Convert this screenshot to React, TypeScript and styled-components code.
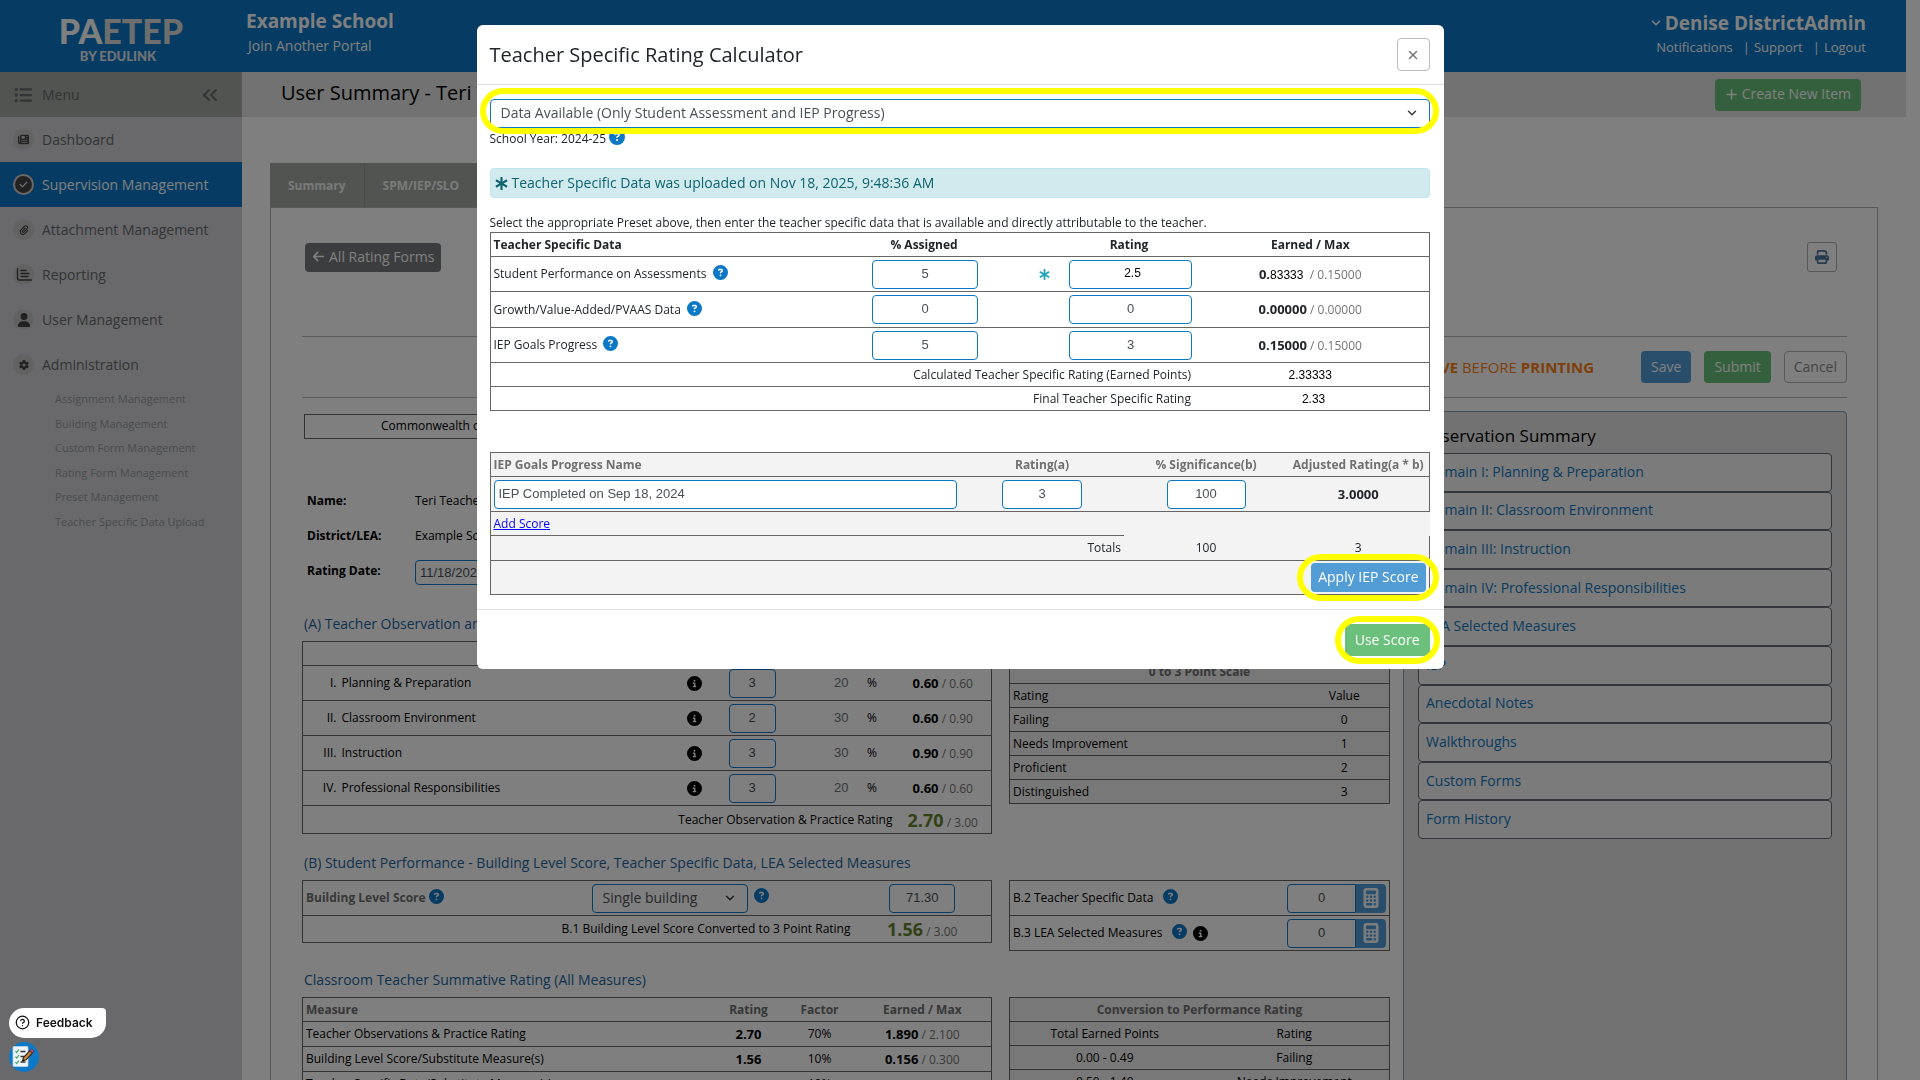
import React, { useId } from "react";
import styled, { createGlobalStyle, css } from "styled-components";
import {
  FaArrowLeft,
  FaCalculator,
  FaCheck,
  FaCircleInfo,
  FaCircleQuestion,
  FaGear,
  FaListUl,
  FaNewspaper,
  FaPaperclip,
  FaPlus,
  FaPrint,
  FaUser,
} from "react-icons/fa6";
import { FaAsterisk } from "react-icons/fa";
import { ChevronDown, ChevronsLeft, CircleHelp, X } from "lucide-react";

const font = {
  ui: '"Open Sans", "Noto Sans", sans-serif',
  field: '"Liberation Sans", Arial, sans-serif',
  logo: 'Lato, "Open Sans", sans-serif',
  widget: "Inter, sans-serif",
};

const color = {
  brand: "#0c78c6",
  button: "#539dd7",
  green: "#6bc17c",
  line: "#666",
  muted: "#707070",
  score: "#64842f",
  heading: "#1e649c",
};

const GlobalStyle = createGlobalStyle`
  *, *::before, *::after { box-sizing: border-box; }
  body { margin: 0; background: #fff; font-family: ${font.ui}; font-size: 12px; line-height: 18px; color: #000; }
  button, input, select { font-family: inherit; margin: 0; }
  a { text-decoration: none; color: inherit; }
  h1, h2, h3, p, ul { margin: 0; padding: 0; font-weight: 400; }
  ul { list-style: none; }
`;

/* ---------- page frame ---------- */

const Page = styled.div`
  height: 100vh;
  overflow: hidden;
  padding-right: 14px;
  display: flex;
  flex-direction: column;
`;

const TopBar = styled.header`
  flex: none;
  height: 72px;
  display: flex;
  background: ${color.brand};
  color: #fff;
`;

const Logo = styled.div`
  width: 242px;
  display: flex;
  flex-direction: column;
  align-items: center;
  font-family: ${font.logo};
  font-weight: 900;
  font-size: 13px;
  line-height: 14px;
  padding: 12px 6px 0 0;
  color: #e4e8ec;
`;

const LogoName = styled.span`
  padding-left: 6px;
  font-size: 34px;
  line-height: 37px;
  color: #dcdcdc;
  & > b { color: #fff; font-weight: 900; }
`;

const School = styled.div`
  flex: 1;
  padding: 8px 4px 0;
`;

const SchoolName = styled.h1`
  font-size: 19px;
  line-height: 26px;
  font-weight: 700;
`;

const PortalLink = styled.a`
  display: block;
  padding: 2px;
  font-size: 14px;
  line-height: 20px;
`;

const Account = styled.div`
  padding: 10px 40px 0 0;
  display: flex;
  flex-direction: column;
  align-items: flex-end;
`;

const AccountName = styled.button`
  display: flex;
  align-items: center;
  gap: 2px;
  border: 0;
  padding: 0;
  background: none;
  color: #fff;
  font-size: 19px;
  line-height: 26px;
  font-weight: 700;
`;

const AccountLinks = styled.nav`
  display: flex;
  gap: 10px;
  font-size: 13px;
  line-height: 23px;
  & a + a::before { content: "|"; margin-right: 4px; }
`;

const Columns = styled.div`
  flex: 1;
  min-height: 0;
  display: flex;
`;

/* ---------- side menu ---------- */

const Side = styled.nav`
  flex: none;
  width: 242px;
  background: #d2d3d6;
  color: #666a6e;
`;

const MenuBar = styled.div`
  display: flex;
  align-items: center;
  height: 45px;
  padding: 0 20px 0 14px;
  gap: 10px;
  background: #a5a8a5;
  font-size: 14px;
  & > span { flex: 1; }
`;

const PlainButton = styled.button`
  display: flex;
  padding: 0;
  border: 0;
  background: none;
  color: inherit;
`;

const SideItem = styled.a<{ $active?: boolean }>`
  display: flex;
  align-items: center;
  gap: 8px;
  height: 45px;
  padding-left: 13px;
  font-size: 14px;
  ${(p) => p.$active && css`background: ${color.brand}; color: #fff;`}
`;

const SideIcon = styled.span<{ $active?: boolean }>`
  display: flex;
  align-items: center;
  justify-content: center;
  width: 21px;
  height: 21px;
  border-radius: 50%;
  background: ${(p) => (p.$active ? "#444" : "#c4c4c4")};
  color: ${(p) => (p.$active ? "#e4e4e4" : "#444")};
  border: ${(p) => (p.$active ? "2px solid #d0d0d0" : "0")};
`;

const SubList = styled.ul`
  padding: 3px 0 0 55px;
  font-size: 11px;
  color: #94979a;
  & > li { height: 25px; }
  & > li:nth-child(2n) { height: 24px; }
`;

/* ---------- main area ---------- */

const Main = styled.main`
  flex: 1;
  min-width: 0;
`;

const TitleBar = styled.div`
  display: flex;
  align-items: center;
  justify-content: space-between;
  height: 45px;
  padding: 0 45px 0 39px;
  background: #e4e4e4;
`;

const PageTitle = styled.h2`
  padding-bottom: 3px;
  font-size: 20px;
  line-height: 28px;
`;

const Button = styled.button<{ $tone: "blue" | "green" | "grey" | "outline"; $tall?: boolean }>`
  display: inline-flex;
  align-items: center;
  justify-content: center;
  gap: 4px;
  height: ${(p) => (p.$tall ? 32 : 29)}px;
  padding: 0 ${(p) => (p.$tall ? 9 : 6)}px 1px;
  border: 1px solid transparent;
  border-radius: 4px;
  font-size: 14px;
  line-height: 20px;
  white-space: nowrap;
  color: #fff;
  ${(p) => p.$tone === "blue" && css`background: ${color.button};`}
  ${(p) => p.$tone === "green" && css`background: ${color.green};`}
  ${(p) => p.$tone === "grey" && css`background: #797b7f;`}
  ${(p) => p.$tone === "outline" && css`background: #fff; border-color: #b4b4b4; color: #888;`}
`;

const Content = styled.div`
  padding: 46px 28px 0;
`;

const Tabs = styled.div`
  display: flex;
  width: 280px;
  height: 44px;
  background: #a5a8a5;
  & > button {
    border: 0;
    border-right: 1px solid #959895;
    padding: 0 18px;
    background: none;
    color: #f4f4f4;
    font-size: 12px;
    font-weight: 700;
  }
`;

const Panel = styled.section`
  border: 1px solid #b0b0b0;
  padding: 34px 30px 0 31px;
  height: 1400px;
`;

const PanelTools = styled.div`
  display: flex;
  align-items: center;
  justify-content: space-between;
  padding: 0 10px 0 3px;
`;

const PrintButton = styled.button`
  display: flex;
  align-items: center;
  justify-content: center;
  width: 30px;
  height: 30px;
  border: 1px solid #b0b0b0;
  border-radius: 3px;
  background: #fff;
  color: #4c74a0;
`;

const Actions = styled.div`
  display: flex;
  align-items: center;
  justify-content: flex-end;
  gap: 13px;
  height: 62px;
  margin-top: 64px;
  border: solid #b8b8b8;
  border-width: 1px 0;
`;

const Warning = styled.p`
  margin-right: 34px;
  font-size: 15px;
  line-height: 20px;
  color: #fd7e14;
  & > b { font-weight: 700; }
`;

const Sheet = styled.div`
  display: grid;
  grid-template-columns: 1088fr 444fr;
  gap: 13px;
  margin-top: 13px;
`;

const Agency = styled.p`
  margin: 3px 0 44px 2px;
  padding: 2px 76px;
  height: 25px;
  border: 1px solid ${color.line};
`;

const Facts = styled.div`
  display: grid;
  grid-template-columns: 108px 1fr;
  grid-auto-rows: 35px;
  align-items: center;
  padding-left: 5px;
  & > label, & > b { font-weight: 700; }
`;

const SectionTitle = styled.h3<{ $gap: number }>`
  margin: ${(p) => p.$gap}px 2px 7px;
  font-size: 14px;
  line-height: 20px;
  color: ${color.heading};
`;

const Pair = styled.div`
  display: grid;
  grid-template-columns: 690fr 381fr;
  align-items: start;
  gap: 17px;
`;

/* ---------- tables and fields ---------- */

const Grid = styled.table<{ $fill?: string; $drop?: number }>`
  width: 100%;
  margin-top: ${(p) => p.$drop ?? 0}px;
  border-collapse: collapse;
  table-layout: fixed;
  border: 1px solid ${color.line};
  background: ${(p) => p.$fill ?? "transparent"};
  & tr { border: 1px solid ${color.line}; }
`;

const Row = styled.tr<{ $h: number }>`
  height: ${(p) => p.$h}px;
`;

type CellProps = { $align?: "left" | "center" | "right"; $muted?: boolean; $end?: number };
const cell = css<CellProps>`
  padding: 0 ${(p) => p.$end ?? 3}px 0 3px;
  text-align: ${(p) => p.$align ?? "left"};
  vertical-align: middle;
  white-space: nowrap;
`;
const Td = styled.td<CellProps>`${cell}`;
const Th = styled.th<CellProps>`
  ${cell}
  font-weight: 700;
  color: ${(p) => (p.$muted ? color.muted : "inherit")};
`;

const Field = styled.input<{ $w?: number; $align?: "left" | "center"; $joined?: boolean }>`
  display: block;
  width: ${(p) => (p.$w ? `${p.$w}px` : "100%")};
  height: 29px;
  margin: 0 ${(p) => (p.$joined ? 0 : "auto")};
  padding: 0 4px 2px;
  border: 1px solid ${color.brand};
  border-radius: ${(p) => (p.$joined ? "4px 0 0 4px" : "4px")};
  background: #fff;
  color: #495057;
  font-family: ${font.field};
  font-size: 13px;
  text-align: ${(p) => p.$align ?? "center"};
`;

const BlackField = styled(Field)`
  color: #000;
  font-size: 12px;
  padding-left: 8px;
`;

const DateField = styled(Field)`
  height: 25px;
  margin: 4px 0 0;
  padding: 0 4px;
`;

const Earned = styled.b`
  font-size: 13px;
  font-weight: 700;
`;

const Big = styled.b`
  font-size: 18px;
  line-height: 24px;
  font-weight: 700;
  color: ${color.score};
`;

const Max = styled.span`
  color: #757575;
`;

const Typed = styled.span`
  font-family: ${font.field};
  font-size: 12px;
  color: #000;
`;

const Weight = styled.span`
  font-family: ${font.field};
  font-size: 13px;
  color: #6c757d;
`;

const HelpMark = styled(FaCircleQuestion)`
  color: ${color.brand};
  vertical-align: -2px;
  margin-left: 3px;
`;
const InfoMark = styled(FaCircleInfo)`
  color: #000;
  vertical-align: middle;
`;

const SelectBox = styled.span<{ $w?: number }>`
  position: relative;
  display: inline-block;
  vertical-align: middle;
  width: ${(p) => (p.$w ? `${p.$w}px` : "100%")};
  & > svg {
    position: absolute;
    right: 11px;
    top: 7px;
    color: #343a40;
    pointer-events: none;
  }
  & > select {
    display: block;
    appearance: none;
    width: 100%;
    height: 29px;
    padding: 0 30px 2px 10px;
    border: 1px solid ${color.brand};
    border-radius: 4px;
    background: #fff;
    color: #495057;
    font-size: 14px;
  }
`;

const Joined = styled.div`
  display: flex;
  justify-content: flex-end;
`;

const CalcButton = styled.button`
  display: flex;
  align-items: center;
  justify-content: center;
  width: 30px;
  height: 29px;
  padding: 0;
  border: 0;
  border-radius: 0 4px 4px 0;
  background: ${color.button};
  color: #f4f8fc;
`;

/* ---------- observation summary ---------- */

const Summary = styled.aside`
  height: 1000px;
  padding: 12px 14px;
  border: 1px solid #7aa0bc;
  border-radius: 4px;
  background: #e4e4e4;
  & > h3 { font-size: 17px; line-height: 24px; height: 29px; }
`;

const SummaryList = styled.ul`
  display: grid;
  grid-auto-rows: 1fr;
  min-height: 386px;
  & > li {
    display: flex;
    align-items: center;
    padding: 0 7px 1px;
    border: 1px solid #666e78;
    border-radius: 4px;
    background: #f6f6f6;
    color: #1478c0;
    font-size: 14px;
  }
`;

/* ---------- dialog ---------- */

const Shade = styled.div`
  position: fixed;
  inset: 0;
  display: flex;
  justify-content: center;
  align-items: flex-start;
  padding-top: 25px;
  background: rgba(0, 0, 0, 0.5);
`;

const Dialog = styled.section`
  width: 967px;
  max-width: 100%;
  border-radius: 6px;
  background: #fff;
  color: #212529;
`;

const DialogHead = styled.header`
  display: flex;
  align-items: center;
  justify-content: space-between;
  padding: 13px 14px 13px 13px;
  border-bottom: 1px solid #dee2e6;
  & > h2 { font-size: 20px; line-height: 28px; }
`;

const CloseButton = styled.button`
  display: flex;
  align-items: center;
  justify-content: center;
  width: 33px;
  height: 33px;
  padding: 0;
  border: 1px solid #bbb;
  border-radius: 4px;
  background: #fff;
  color: #777;
`;

const DialogBody = styled.div`
  padding: 14px 14px 14px 13px;
`;

const DialogFoot = styled.footer`
  display: flex;
  justify-content: flex-end;
  padding: 14px 14px 13px;
  border-top: 1px solid #dee2e6;
`;

const Ring = styled.div<{ $top: number; $right: number; $bottom: number; $left: number; $inline?: boolean }>`
  position: relative;
  display: ${(p) => (p.$inline ? "inline-block" : "block")};
  vertical-align: middle;
  &::after {
    content: "";
    position: absolute;
    z-index: 1;
    top: -${(p) => p.$top}px;
    right: -${(p) => p.$right}px;
    bottom: -${(p) => p.$bottom}px;
    left: -${(p) => p.$left}px;
    border: 6px solid #ff0;
    border-radius: 24px;
    pointer-events: none;
  }
`;

const YearLine = styled.p`
  padding-top: 1px;
  margin-bottom: 20px;
  line-height: 19px;
`;

const Notice = styled.p`
  display: flex;
  align-items: center;
  gap: 4px;
  height: 30px;
  margin-bottom: 16px;
  padding: 0 4px;
  border: 1px solid #bee5eb;
  border-radius: 4px;
  background: #d1eaee;
  color: #0d6370;
  font-size: 14px;
`;

const Star = styled(FaAsterisk)`
  color: #1ea5b8;
  vertical-align: middle;
`;

const IepGrid = styled(Grid)`
  margin-top: 41px;
  background: #f3f3f3;
  border-right: 0;
  & tr { border: 0; }
  & th { border-top: 1px solid ${color.line}; }
`;

const IepCell = styled(Td)<{ $top?: boolean; $closed?: boolean }>`
  border-top: ${(p) => (p.$top ? `1px solid ${color.line}` : "0")};
  border-right: ${(p) => (p.$closed ? `1px solid ${color.line}` : "0")};
`;

const IepHead = styled(Th)<{ $closed?: boolean }>`
  border-right: ${(p) => (p.$closed ? `1px solid ${color.line}` : "0")};
`;

const AddLink = styled.a`
  color: #00f;
  text-decoration: underline;
`;

/* ---------- feedback widgets ---------- */

const Widgets = styled.div`
  position: fixed;
  left: 9px;
  bottom: 8px;
  display: flex;
  flex-direction: column;
  gap: 4px;
  align-items: flex-start;
`;

const Feedback = styled.button`
  display: flex;
  align-items: center;
  gap: 6px;
  height: 30px;
  padding: 0 13px 1px 6px;
  border: 0;
  border-radius: 15px 4px 15px 15px;
  background: #fff;
  color: #111;
  font-family: ${font.widget};
  font-size: 12px;
  font-weight: 600;
`;

const NotesButton = styled.button`
  width: 30px;
  height: 30px;
  padding: 0;
  border: 0;
  border-radius: 50%;
  background: ${color.brand};
  & > svg { display: block; }
`;

function ReportIcon() {
  return (
    <svg width="16" height="14" viewBox="0 0 16 14" fill="none" stroke="currentColor" strokeWidth="1.4">
      <path d="M1.5 1v9.5a1.5 1.5 0 0 0 1.500 1.500H15.500M5 2.500h5M5 5.500h8M5 8.500h7" strokeLinecap="round" />
    </svg>
  );
}

function NotesIcon() {
  return (
    <svg width="30" height="30" viewBox="0 0 30 30">
      <rect x="4" y="4.500" width="15" height="20" rx="1" fill="#eef5fa" stroke="#b9d3e6" strokeWidth="0.800" />
      <path d="M6.500 9l1.200 1.500L10 7.500M6.500 14.500l1.200 1.500L10 13M6.500 20l1.200 1.500L10 18.500" fill="none" stroke="#3aa655" strokeWidth="1.200" />
      <path d="M11.500 9.500h5M11.500 14.500h4M11.500 20h5" stroke="#333" strokeWidth="1.400" />
      <path d="M13.500 19l1-3.500 6.500-7 2.500 2.300-6.500 7z" fill="#c98a3c" stroke="#3a2412" strokeWidth="1.200" />
      <path d="M21 8.500l1.500-1.700 2.300 2.200-1.300 1.800z" fill="#d8578a" stroke="#3a2430" strokeWidth="0.700" />
      <path d="M13.500 19l.5-1.800 1.300 1.200z" fill="#111" />
    </svg>
  );
}

function Select({ label, value, width }: { label: string; value: string; width?: number }) {
  return (
    <SelectBox $w={width}>
      <select aria-label={label} defaultValue={value}>
        <option>{value}</option>
      </select>
      <ChevronDown size={14} strokeWidth={2.5} />
    </SelectBox>
  );
}

function Cols({ widths }: { widths: (number | null)[] }) {
  return (
    <colgroup>
      {widths.map((w, i) => (
        <col key={i} width={w ?? undefined} />
      ))}
    </colgroup>
  );
}

const sideItems = [
  { text: "Dashboard", icon: <FaNewspaper size={11} /> },
  { text: "Supervision Management", icon: <FaCheck size={9} />, active: true },
  { text: "Attachment Management", icon: <FaPaperclip size={10} /> },
  { text: "Reporting", icon: <ReportIcon /> },
  { text: "User Management", icon: <FaUser size={14} /> },
  { text: "Administration", icon: <FaGear size={10} /> },
];

const adminItems = [
  "Assignment Management",
  "Building Management",
  "Custom Form Management",
  "Rating Form Management",
  "Preset Management",
  "Teacher Specific Data Upload",
];

const domains = [
  ["I.", "Planning & Preparation", "3", "20", "0.60", "0.60"],
  ["II.", "Classroom Environment", "2", "30", "0.60", "0.90"],
  ["III.", "Instruction", "3", "30", "0.90", "0.90"],
  ["IV.", "Professional Responsibilities", "3", "20", "0.60", "0.60"],
];

const scale = [
  ["Rating", "Value"],
  ["Failing", "0"],
  ["Needs Improvement", "1"],
  ["Proficient", "2"],
  ["Distinguished", "3"],
];

const measures = [
  ["Teacher Observations & Practice Rating", "2.70", "70%", "1.890", "2.100"],
  ["Building Level Score/Substitute Measure(s)", "1.56", "10%", "0.156", "0.300"],
  ["Teacher Specific Data/Substitute Measure(s)", "0.00", "10%", "0.000", "0.300"],
];

const conversion = [
  ["Total Earned Points", "Rating"],
  ["0.00 - 0.49", "Failing"],
  ["0.50 - 1.49", "Needs Improvement"],
];

const summaryLinks = [
  "Domain I: Planning & Preparation",
  "Domain II: Classroom Environment",
  "Domain III: Instruction",
  "Domain IV: Professional Responsibilities",
  "LEA Selected Measures",
  "IEP",
  "Anecdotal Notes",
  "Walkthroughs",
  "Custom Forms",
  "Form History",
];

function SideMenu() {
  return (
    <Side>
      <MenuBar>
        <FaListUl size={18} />
        <span>Menu</span>
        <PlainButton aria-label="Collapse menu"><ChevronsLeft size={24} /></PlainButton>
      </MenuBar>
      {sideItems.map((item) => (
        <SideItem key={item.text} href="#" $active={item.active}>
          <SideIcon $active={item.active}>{item.icon}</SideIcon>
          {item.text}
        </SideItem>
      ))}
      <SubList>
        {adminItems.map((text) => (
          <li key={text}><a href="#">{text}</a></li>
        ))}
      </SubList>
    </Side>
  );
}

function ObservationPractice() {
  return (
    <Pair>
      <Grid>
        <Cols widths={[36, null, 30, 85, 55, 45, 97]} />
        <tbody>
          <Row $h={24}><Td colSpan={7} /></Row>
          {domains.map(([num, name, rating, weight, earned, max]) => (
            <Row key={num} $h={35}>
              <Td $align="right" $end={2}>{num}</Td>
              <Td>{name}</Td>
              <Td $align="center"><InfoMark size={15} /></Td>
              <Td><Field aria-label={name} $w={47} defaultValue={rating} /></Td>
              <Td $align="right" $end={1}><Weight>{weight}</Weight></Td>
              <Td $align="center">%</Td>
              <Td $align="center"><Earned>{earned}</Earned> <Max>/ {max}</Max></Td>
            </Row>
          ))}
          <Row $h={28}>
            <Td colSpan={6} $align="right" $end={2}>Teacher Observation &amp; Practice Rating</Td>
            <Td $align="center"><Big>2.70</Big> <Max>/ 3.00</Max></Td>
          </Row>
        </tbody>
      </Grid>
      <Grid $fill="#f0f0f0" $drop={18}>
        <Cols widths={[null, 90]} />
        <tbody>
          <Row $h={24}><Th colSpan={2} $align="center" $muted>0 to 3 Point Scale</Th></Row>
          {scale.map(([name, value]) => (
            <Row key={name} $h={24}><Td>{name}</Td><Td $align="center">{value}</Td></Row>
          ))}
        </tbody>
      </Grid>
    </Pair>
  );
}

function StudentPerformance() {
  return (
    <Pair>
      <Grid>
        <Cols widths={[286, null, 138]} />
        <tbody>
          <Row $h={35}>
            <Th $muted scope="row">Building Level Score<HelpMark size={15} /></Th>
            <Td>
              <Select label="Building selection" value="Single building" width={156} />{" "}
              <HelpMark size={15} />
            </Td>
            <Td><Field aria-label="Building level score" $w={66} defaultValue="71.30" /></Td>
          </Row>
          <Row $h={27}>
            <Td colSpan={2} $align="right">B.1 Building Level Score Converted to 3 Point Rating</Td>
            <Td $align="center"><Big>1.56</Big> <Max>/ 3.00</Max></Td>
          </Row>
        </tbody>
      </Grid>
      <Grid>
        <Cols widths={[null, 106]} />
        <tbody>
          <Row $h={35}>
            <Td>B.2 Teacher Specific Data&nbsp; <HelpMark size={15} /></Td>
            <Td>
              <Joined>
                <Field aria-label="B.2 Teacher Specific Data" $joined $w={69} defaultValue="0" />
                <CalcButton aria-label="Open teacher specific calculator"><FaCalculator size={20} /></CalcButton>
              </Joined>
            </Td>
          </Row>
          <Row $h={35}>
            <Td>B.3 LEA Selected Measures&nbsp; <HelpMark size={15} />&nbsp; <InfoMark size={15} /></Td>
            <Td>
              <Joined>
                <Field aria-label="B.3 LEA Selected Measures" $joined $w={69} defaultValue="0" />
                <CalcButton aria-label="Open LEA calculator"><FaCalculator size={20} /></CalcButton>
              </Joined>
            </Td>
          </Row>
        </tbody>
      </Grid>
    </Pair>
  );
}

function SummativeRating() {
  return (
    <Pair>
      <Grid>
        <Cols widths={[null, 74, 68, 138]} />
        <thead>
          <Row $h={24}>
            <Th $muted>Measure</Th>
            <Th $muted $align="center">Rating</Th>
            <Th $muted $align="center">Factor</Th>
            <Th $muted $align="center">Earned / Max</Th>
          </Row>
        </thead>
        <tbody>
          {measures.map(([name, rating, factor, earned, max]) => (
            <Row key={name} $h={25}>
              <Td>{name}</Td>
              <Td $align="center"><Earned>{rating}</Earned></Td>
              <Td $align="center">{factor}</Td>
              <Td $align="center"><Earned>{earned}</Earned> <Max>/ {max}</Max></Td>
            </Row>
          ))}
        </tbody>
      </Grid>
      <Grid $fill="#f0f0f0">
        <tbody>
          <Row $h={24}><Th colSpan={2} $align="center" $muted>Conversion to Performance Rating</Th></Row>
          {conversion.map(([points, rating]) => (
            <Row key={points} $h={24}><Td $align="center">{points}</Td><Td $align="center">{rating}</Td></Row>
          ))}
        </tbody>
      </Grid>
    </Pair>
  );
}

function SpecificDataTable() {
  return (
    <Grid>
      <Cols widths={[379, 110, 87, 126, null]} />
      <thead>
        <Row $h={24}>
          <Th>Teacher Specific Data</Th>
          <Th $align="center">% Assigned</Th>
          <Th />
          <Th $align="center">Rating</Th>
          <Th $align="center">Earned / Max</Th>
        </Row>
      </thead>
      <tbody>
        <Row $h={35}>
          <Td>Student Performance on Assessments <HelpMark size={15} /></Td>
          <Td $end={1}><Field aria-label="Student performance percent" $w={106} defaultValue="5" /></Td>
          <Td $align="right" $end={16}><Star size={11} /></Td>
          <Td $end={3}><BlackField aria-label="Student performance rating" $w={123} defaultValue="2.5" /></Td>
          <Td $align="center"><Earned>0.</Earned><Typed>83333</Typed> <Max>&nbsp;/ 0.15000</Max></Td>
        </Row>
        <Row $h={36}>
          <Td>Growth/Value-Added/PVAAS Data <HelpMark size={15} /></Td>
          <Td $end={1}><Field aria-label="Growth percent" $w={106} defaultValue="0" /></Td>
          <Td />
          <Td $end={3}><Field aria-label="Growth rating" $w={123} defaultValue="0" /></Td>
          <Td $align="center"><Earned>0.00000</Earned> <Max>/ 0.00000</Max></Td>
        </Row>
        <Row $h={35}>
          <Td>IEP Goals Progress <HelpMark size={15} /></Td>
          <Td $end={1}><Field aria-label="IEP percent" $w={106} defaultValue="5" /></Td>
          <Td />
          <Td $end={3}><Field aria-label="IEP rating" $w={123} defaultValue="3" /></Td>
          <Td $align="center"><Earned>0.15000</Earned> <Max>/ 0.15000</Max></Td>
        </Row>
        <Row $h={24}>
          <Td colSpan={4} $align="right" $end={1}>Calculated Teacher Specific Rating (Earned Points)</Td>
          <Td $align="center"><Typed>2.33333</Typed></Td>
        </Row>
        <Row $h={24}>
          <Td colSpan={4} $align="right" $end={1}>Final Teacher Specific Rating</Td>
          <Td $align="center"><Typed>&nbsp;&nbsp;2.33</Typed></Td>
        </Row>
      </tbody>
    </Grid>
  );
}

function IepTable() {
  return (
    <IepGrid>
      <Cols widths={[470, 164, 164, null]} />
      <thead>
        <Row $h={24}>
          <IepHead $muted>IEP Goals Progress Name</IepHead>
          <IepHead $muted $align="center">Rating(a)</IepHead>
          <IepHead $muted $align="center">% Significance(b)</IepHead>
          <IepHead $muted $align="center" $closed>Adjusted Rating(a * b)</IepHead>
        </Row>
      </thead>
      <tbody>
        <Row $h={35}>
          <IepCell $top><Field aria-label="IEP goals progress name" $align="left" defaultValue="IEP Completed on Sep 18, 2024" /></IepCell>
          <IepCell $top><Field aria-label="Rating (a)" $w={80} defaultValue="3" /></IepCell>
          <IepCell $top><Field aria-label="Percent significance (b)" $w={79} defaultValue="100" /></IepCell>
          <IepCell $top $closed $align="center"><Earned>3.0000</Earned></IepCell>
        </Row>
        <Row $h={24}>
          <IepCell $top colSpan={4}><AddLink href="#">Add Score</AddLink></IepCell>
        </Row>
        <Row $h={25}>
          <IepCell $top colSpan={2} $align="right">Totals</IepCell>
          <IepCell $align="center">100</IepCell>
          <IepCell $align="center" $closed>3</IepCell>
        </Row>
        <Row $h={34}>
          <IepCell $top $closed colSpan={4} $align="right">
            <Ring $inline $top={9} $right={13} $bottom={9} $left={14}>
              <Button $tone="blue">Apply IEP Score</Button>
            </Ring>
          </IepCell>
        </Row>
      </tbody>
    </IepGrid>
  );
}

function Calculator() {
  const titleId = useId();
  return (
    <Shade>
      <Dialog role="dialog" aria-modal="true" aria-labelledby={titleId}>
        <DialogHead>
          <h2 id={titleId}>Teacher Specific Rating Calculator</h2>
          <CloseButton aria-label="Close"><X size={14} strokeWidth={2.5} /></CloseButton>
        </DialogHead>
        <DialogBody>
          <Ring $top={11} $right={9} $bottom={6} $left={10}>
            <Select label="Preset" value="Data Available (Only Student Assessment and IEP Progress)" />
          </Ring>
          <YearLine>School Year: 2024-25<HelpMark size={16} /></YearLine>
          <Notice><FaAsterisk size={13} />Teacher Specific Data was uploaded on Nov 18, 2025, 9:48:36 AM</Notice>
          <p>Select the appropriate Preset above, then enter the teacher specific data that is available and directly attributable to the teacher.</p>
          <SpecificDataTable />
          <IepTable />
        </DialogBody>
        <DialogFoot>
          <Ring $inline $top={8} $right={10} $bottom={8} $left={10}>
            <Button $tone="green" $tall>Use Score</Button>
          </Ring>
        </DialogFoot>
      </Dialog>
    </Shade>
  );
}

export default function App() {
  return (
    <>
      <GlobalStyle />
      <Page>
        <TopBar>
          <Logo><LogoName><b>PA</b>ETEP</LogoName>BY EDULINK</Logo>
          <School>
            <SchoolName>Example School</SchoolName>
            <PortalLink href="#">Join Another Portal</PortalLink>
          </School>
          <Account>
            <AccountName><ChevronDown size={14} strokeWidth={2.5} />Denise DistrictAdmin</AccountName>
            <AccountLinks>
              <a href="#">Notifications</a>
              <a href="#">Support</a>
              <a href="#">Logout</a>
            </AccountLinks>
          </Account>
        </TopBar>
        <Columns>
          <SideMenu />
          <Main>
            <TitleBar>
              <PageTitle>User Summary - Teri Teacher</PageTitle>
              <Button $tone="green" $tall><FaPlus size={13} />Create New Item</Button>
            </TitleBar>
            <Content>
              <Tabs>
                <button>Summary</button>
                <button>SPM/IEP/SLO</button>
              </Tabs>
              <Panel>
                <PanelTools>
                  <Button $tone="grey"><FaArrowLeft size={13} />All Rating Forms</Button>
                  <PrintButton aria-label="Print"><FaPrint size={14} /></PrintButton>
                </PanelTools>
                <Actions>
                  <Warning><b>SAVE</b> BEFORE <b>PRINTING</b></Warning>
                  <Button $tone="blue" $tall>Save</Button>
                  <Button $tone="green" $tall>Submit</Button>
                  <Button $tone="outline" $tall>Cancel</Button>
                </Actions>
                <Sheet>
                  <div>
                    <Agency>Commonwealth of Pennsylvania</Agency>
                    <Facts>
                      <b>Name:</b><span>Teri Teacher</span>
                      <b>District/LEA:</b><span>Example School</span>
                      <label htmlFor="rating-date">Rating Date:</label>
                      <DateField id="rating-date" $w={120} $align="left" defaultValue="11/18/2025" />
                    </Facts>
                    <SectionTitle $gap={26}>(A) Teacher Observation and Practice</SectionTitle>
                    <ObservationPractice />
                    <SectionTitle $gap={19}>
                      (B) Student Performance - Building Level Score, Teacher Specific Data, LEA Selected Measures
                    </SectionTitle>
                    <StudentPerformance />
                    <SectionTitle $gap={19}>Classroom Teacher Summative Rating (All Measures)</SectionTitle>
                    <SummativeRating />
                  </div>
                  <Summary>
                    <h3>Observation Summary</h3>
                    <SummaryList>
                      {summaryLinks.map((text) => (
                        <li key={text}><a href="#">{text}</a></li>
                      ))}
                    </SummaryList>
                  </Summary>
                </Sheet>
              </Panel>
            </Content>
          </Main>
        </Columns>
      </Page>
      <Calculator />
      <Widgets>
        <Feedback><CircleHelp size={15} />Feedback</Feedback>
        <NotesButton aria-label="Notes"><NotesIcon /></NotesButton>
      </Widgets>
    </>
  );
}
